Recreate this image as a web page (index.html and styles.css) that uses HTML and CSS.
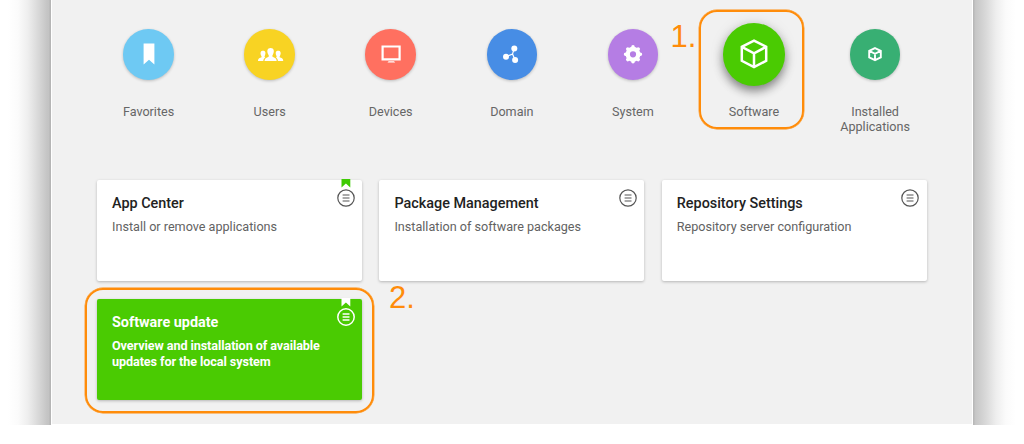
FILE: index.html
```html
<!DOCTYPE html>
<html lang="en">
<head>
<meta charset="utf-8">
<title>Software</title>
<link rel="stylesheet" href="styles.css">
</head>
<body>
<div class="window">
  <div class="edge edge-left"></div>
  <main class="panel">
    <nav class="categories">
      <a class="category">
        <span class="slot"><span class="disc favorites"><svg width="50" height="50" viewBox="0 0 50 50"><path d="M19.600 14.500H30.400V35.500L25 30.700L19.600 35.500Z"/></svg></span></span>
        <span class="label">Favorites</span>
      </a>
      <a class="category">
        <span class="slot"><span class="disc users"><svg width="50" height="50" viewBox="0 0 50 50"><path d="M19.500 32q0-3 3.700-4.100c1-.4.800-1.300.2-2.200-1.900-3.500-1.200-6.700 2.200-6.700s4.100 3.200 2.200 6.700c-.6.900-.8 1.800.2 2.200q3.700 1.100 3.700 4.100z"/><path d="M13 32q-.2-2.700 3-3.400c1-.3.700-1 .2-1.900-1.400-2.900-.6-5 1.900-5 2.200 0 3 2 1.800 4.800-.6 1.200-.4 1.700.4 2-1.300.8-2 1.900-2 3.500zM38.200 32q.2-2.700-3-3.400c-1-.3-.7-1-.2-1.900 1.400-2.900.6-5-1.900-5-2.200 0-3 2-1.800 4.800.6 1.200.4 1.700-.4 2 1.300.8 2 1.900 2 3.500z"/></svg></span></span>
        <span class="label">Users</span>
      </a>
      <a class="category">
        <span class="slot"><span class="disc devices"><svg width="50" height="50" viewBox="0 0 50 50"><path fill-rule="evenodd" d="M15.500 16.500H34.700V31.400H15.500ZM17.700 18.600V29.300H32.500V18.600Z"/><path d="M21.500 33.600L22.600 32.200H28L29.200 33.600Z"/></svg></span></span>
        <span class="label">Devices</span>
      </a>
      <a class="category">
        <span class="slot"><span class="disc domain"><svg width="50" height="50" viewBox="0 0 50 50"><path class="line" d="M19 27.700L25.500 25.100L27.200 19.500M25.500 25.100L28 30.700"/><circle cx="19" cy="27.700" r="3"/><circle cx="27.300" cy="19.600" r="3"/><circle cx="28.100" cy="31" r="3"/></svg></span></span>
        <span class="label">Domain</span>
      </a>
      <a class="category">
        <span class="slot"><span class="disc system"><svg width="50" height="50" viewBox="0 0 50 50"><circle class="gear-ring" cx="25" cy="25.300" r="5.300"/><path class="gear-teeth" d="M25 17.900V18.800M25 31.800V32.700M17.600 25.300H18.500M31.500 25.300H32.400M19.800 20.100L20.500 20.800M29.500 29.800L30.200 30.500M30.200 20.100L29.500 20.800M20.500 29.800L19.800 30.500"/></svg></span></span>
        <span class="label">System</span>
      </a>
      <a class="category">
        <span class="slot"><span class="disc software"><svg width="62" height="62" viewBox="0 0 62 62"><path class="cube" d="M31 17.700L43.200 23.800V37.800L31 44.100L18.800 37.800V23.800ZM18.800 23.800L31 30.300L43.200 23.800M31 30.300V44.100"/></svg></span></span>
        <span class="label">Software</span>
        <span class="marker marker-software"></span>
        <span class="step step-one">1.</span>
      </a>
      <a class="category">
        <span class="slot"><span class="disc installed"><svg width="50" height="50" viewBox="0 0 50 50"><path class="cube small" d="M25 19.100L30.800 21.900V28.300L25 31.200L19.200 28.300V21.900ZM19.200 21.900L25 24.800L30.800 21.900M25 24.800V31.200"/></svg></span></span>
        <span class="label">Installed<br>Applications</span>
      </a>
    </nav>
    <section class="cards">
      <article class="card">
        <h2>App Center</h2>
        <p>Install or remove applications</p>
        <svg class="menu" width="20" height="32" viewBox="0 0 20 32"><path class="flag" d="M5.500 0H14.300V8.500L9.900 4.500L5.500 8.500Z"/><circle cx="10" cy="19" r="8.200"/><path d="M6.600 16H13.500M6.600 19H13.500M6.600 22H13.500"/></svg>
      </article>
      <article class="card">
        <h2>Package Management</h2>
        <p>Installation of software packages</p>
        <svg class="menu" width="20" height="32" viewBox="0 0 20 32"><circle cx="10" cy="19" r="8.200"/><path d="M6.600 16H13.500M6.600 19H13.500M6.600 22H13.500"/></svg>
      </article>
      <article class="card">
        <h2>Repository Settings</h2>
        <p>Repository server configuration</p>
        <svg class="menu" width="20" height="32" viewBox="0 0 20 32"><circle cx="10" cy="19" r="8.200"/><path d="M6.600 16H13.500M6.600 19H13.500M6.600 22H13.500"/></svg>
      </article>
      <article class="card selected">
        <h2>Software update</h2>
        <p>Overview and installation of available<br>updates for the local system</p>
        <svg class="menu" width="20" height="32" viewBox="0 0 20 32"><path class="flag" d="M5.500 0H14.300V8.500L9.900 4.500L5.500 8.500Z"/><circle cx="10" cy="19" r="8.200"/><path d="M6.600 16H13.500M6.600 19H13.500M6.600 22H13.500"/></svg>
        <span class="marker marker-update"></span>
        <span class="step step-two">2.</span>
      </article>
    </section>
  </main>
  <div class="edge edge-right"></div>
</div>
</body>
</html>
```
FILE: styles.css
```css
* { box-sizing: border-box; }
body {
  margin: 0;
  background: #fff;
  font-family: Roboto, "Liberation Sans", sans-serif;
  overflow: hidden;
}
.window {
  display: grid;
  grid-template-columns: 51px 922px 51px;
  height: 425px;
}
.edge-left {
  background: linear-gradient(to right, #fff 8px, #fbfbfb 18px, #eee 28px, #d9d9d9 38px, #c5c5c5 47px, #c3c3c3 49px, #b5b5b5 50px);
}
.edge-right {
  background: linear-gradient(to left, #fff 8px, #fbfbfb 18px, #eee 28px, #d9d9d9 38px, #c9c9c9 47px, #c5c5c5 49px, #b8b8b8 50px);
}
.panel {
  background: #f1f1f1;
  border: solid #fff;
  border-width: 0 1px 1px;
  padding: 0 36px;
}
.categories {
  display: grid;
  grid-template-columns: repeat(7, 121.1px);
  height: 179.600px;
}
.category {
  position: relative;
  display: flex;
  flex-direction: column;
  align-items: center;
  padding-top: 22.800px;
}
.slot {
  display: flex;
  align-items: center;
  justify-content: center;
  height: 63px;
}
.disc {
  display: flex;
  align-items: center;
  justify-content: center;
  width: 50.500px;
  height: 50.500px;
  border-radius: 50%;
  box-shadow: 0 1px 3px rgba(0, 0, 0, .22);
}
.disc svg { fill: #fff; flex: none; }
.favorites { background: #6ec9f3; }
.users { background: #f8d323; }
.devices { background: #ff7060; }
.domain { background: #478de5; }
.system { background: #b57de4; }
.installed { background: #38af73; }
.software {
  width: 62.500px;
  height: 62.500px;
  background: #4acb02;
  box-shadow: 0 5px 10px rgba(0, 0, 0, .42), 0 1px 15px rgba(0, 0, 0, .1);
}
.line { stroke: #fff; stroke-width: 1.200; fill: none; }
.gear-ring { fill: none; stroke: #fff; stroke-width: 4.400; }
.gear-teeth { fill: none; stroke: #fff; stroke-width: 3.600; stroke-linecap: round; }
.cube { fill: none; stroke: #fff; stroke-width: 2.500; }
.small { stroke-width: 1.900; }
.label {
  margin-top: 18.600px;
  font-size: 12.600px;
  line-height: 15px;
  text-align: center;
  color: #666;
}
.cards {
  display: grid;
  grid-template-columns: repeat(3, 265px);
  grid-auto-rows: 101px;
  gap: 18px 17.400px;
  padding-left: 9px;
}
.card {
  position: relative;
  padding: 15px;
  background: #fff;
  border-radius: 2px;
  box-shadow: 0 1px 3px rgba(0, 0, 0, .25);
}
.card h2 {
  margin: 0;
  font-size: 14.400px;
  line-height: 17px;
  font-weight: 500;
  color: #222;
}
.card p {
  margin: 7px 0 0;
  font-size: 12.620px;
  line-height: 16px;
  color: #626262;
  white-space: nowrap;
}
.card.selected { background: #4acb02; }
.selected h2, .selected p { color: #fff; font-weight: 700; }
.card.selected p { letter-spacing: -.080px; }
.menu {
  position: absolute;
  top: -.300px;
  right: 6.300px;
  fill: none;
  stroke: #555;
  stroke-width: 1.200;
}
.menu .flag { fill: #3fcb04; stroke: none; }
.selected .menu { stroke: #fff; stroke-width: 1.500; }
.selected .flag { fill: #fff; }
.marker {
  position: absolute;
  border: 2px solid #ff8c0a;
  border-radius: 18px;
  box-shadow: 0 0 0 .4px #ff8c0a;
}
.marker-software { left: 5.500px; top: 10px; width: 105px; height: 119px; }
.marker-update { left: -12px; top: -10.800px; width: 289px; height: 125.500px; }
.step {
  position: absolute;
  font: 31px/32px "Liberation Sans", Arial, sans-serif;
  color: #ff8c0a;
}
.step-one { left: -23px; top: 21px; }
.step-two { left: 292px; top: -17px; }
```
